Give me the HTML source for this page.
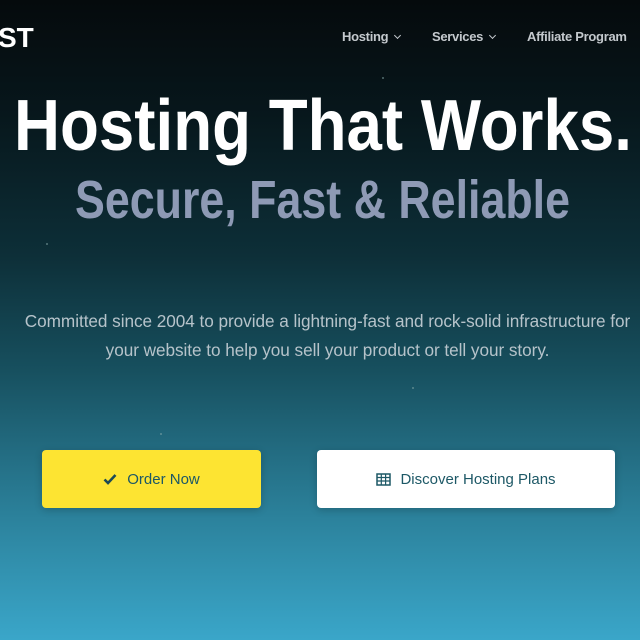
<!DOCTYPE html>
<html><head><meta charset="utf-8"><style>
html,body{margin:0;padding:0}
body{width:640px;height:640px;overflow:hidden;position:relative;font-family:"Liberation Sans",sans-serif;
background:linear-gradient(180deg,#050a0c 0%,#07171c 18%,#0d2f38 40%,#17505f 58%,#246f85 72%,#2f8aa6 85%,#3aa6c9 100%);}
.logo{position:absolute;left:-2px;top:22px;color:#fff;font-size:28px;font-weight:bold;letter-spacing:0px}
.nav{position:absolute;top:29px;font-size:13px;font-weight:bold;color:#c4c9cd;letter-spacing:-0.3px}
.chev{display:inline-block;width:4px;height:4px;border-right:1.3px solid #c4c9cd;border-bottom:1.3px solid #c4c9cd;transform:rotate(45deg);margin-left:7px;position:relative;top:-3px}
svg.h{position:absolute;left:0;top:0}
.p{position:absolute;left:0;width:655px;text-align:center;top:307px;color:#b6c3ca;font-size:17.2px;line-height:29px;letter-spacing:-0.05px}
.btn{position:absolute;top:450px;height:58px;border-radius:4px;display:flex;align-items:center;justify-content:center;font-size:15px;color:#1d5866;box-shadow:0 2px 8px rgba(0,0,0,.2)}
.star{position:absolute;width:2px;height:2px;background:#8aa;border-radius:50%;opacity:.6}
</style></head><body>
<div class="logo">ST</div>
<div class="nav" style="left:342px">Hosting<span class="chev"></span></div>
<div class="nav" style="left:432px">Services<span class="chev"></span></div>
<div class="nav" style="left:527px">Affiliate Program</div>
<div class="star" style="left:382px;top:77px"></div>
<div class="star" style="left:46px;top:243px"></div>
<div class="star" style="left:160px;top:433px"></div>
<div class="star" style="left:412px;top:387px"></div>
<svg class="h" width="640" height="640">
<text x="14" y="150" textLength="618" lengthAdjust="spacingAndGlyphs" font-family="Liberation Sans" font-weight="bold" font-size="72" fill="#fff">Hosting That Works.</text>
<text x="75" y="218" textLength="495" lengthAdjust="spacingAndGlyphs" font-family="Liberation Sans" font-weight="bold" font-size="54" fill="#8e9ab5">Secure, Fast &amp; Reliable</text>
</svg>
<div class="p">Committed since 2004 to provide a lightning-fast and rock-solid infrastructure for<br>your website to help you sell your product or tell your story.</div>
<div class="btn" style="left:42px;width:219px;background:#fde432">
<svg width="14" height="12" viewBox="0 0 14 12" style="margin-right:10px"><path d="M1.5 6.5 L5 10 L12.5 2" stroke="#1d4a55" stroke-width="2.6" fill="none"/></svg>Order Now</div>
<div class="btn" style="left:317px;width:298px;background:#fff">
<svg width="15" height="13" viewBox="0 0 15 13" style="margin-right:9px"><rect x="1" y="1" width="13" height="11" fill="none" stroke="#1d5866" stroke-width="1.5"/><path d="M1 4.5H14M1 8H14M5.3 1V12M9.6 1V12" stroke="#1d5866" stroke-width="1.2"/></svg>Discover Hosting Plans</div>
</body></html>
